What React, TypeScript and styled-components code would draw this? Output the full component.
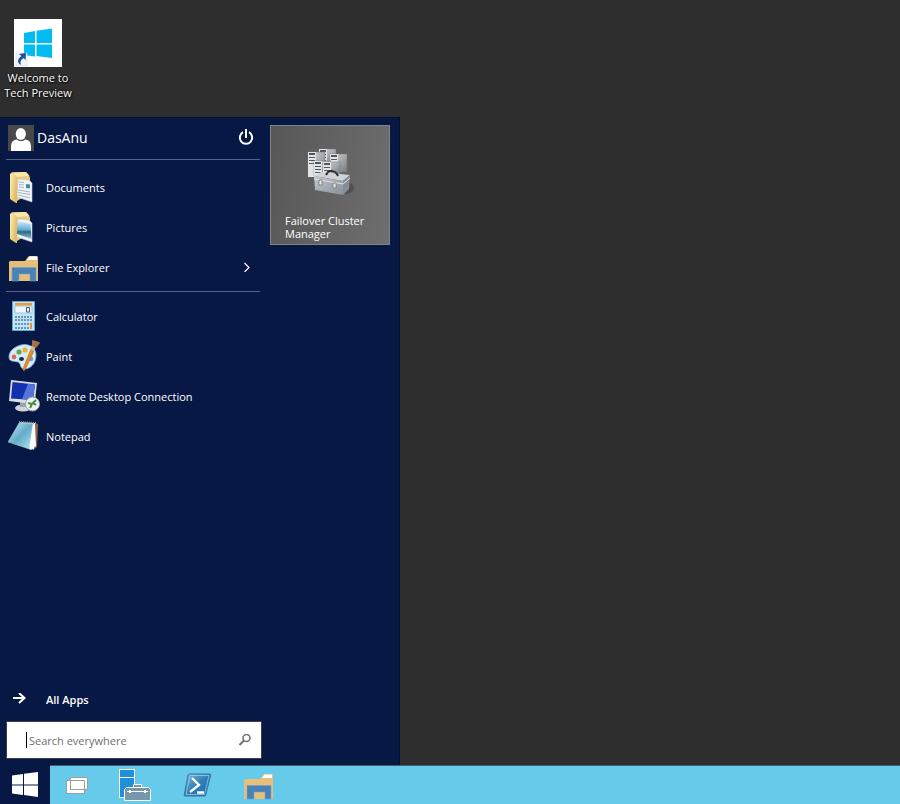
import React from "react";
import styled, { createGlobalStyle } from "styled-components";

const GlobalStyle = createGlobalStyle`
  *, *::before, *::after { box-sizing: border-box; }
  body {
    margin: 0;
    background: #2e2e2e;
    font-family: "Open Sans", "Noto Sans", sans-serif;
    font-size: 11px;
    color: #fff;
  }
  button, input { font: inherit; color: inherit; }
  button { border: 0; padding: 0; background: none; cursor: pointer; }
  svg { display: block; flex: none; }
`;

const Screen = styled.div`
  display: flex;
  flex-direction: column;
  min-height: 100vh;
`;

const Desktop = styled.main`
  padding: 19px 0 17px;
`;

const Shortcut = styled.button`
  display: flex;
  flex-direction: column;
  align-items: center;
  gap: 3px;
  width: 76px;
  line-height: 15px;
  text-shadow: 1px 1px 2px #000, 0 0 2px #000;
`;

const ShortcutLabel = styled.span`
  width: 72px;
`;

const StartMenu = styled.section`
  flex: 1;
  display: flex;
  gap: 8px;
  width: 400px;
  max-width: 100%;
  padding: 7px 9px 6px 6px;
  background: #081844;
  border: solid #050e2c;
  border-width: 1px 1px 0 0;
`;

const MenuColumn = styled.div`
  display: flex;
  flex-direction: column;
  width: 256px;
`;

const Account = styled.header`
  display: flex;
  align-items: center;
  justify-content: space-between;
  margin-right: 2px;
  padding: 0 6px 8px 2px;
  border-bottom: 1px solid #56628a;
`;

const UserButton = styled.button`
  display: flex;
  align-items: center;
  gap: 3px;
  font-size: 14px;
  line-height: 26px;
`;

const List = styled.ul<{ $divided?: boolean }>`
  list-style: none;
  margin: 0 2px 0 0;
  padding: ${(p) => (p.$divided ? "7px 0 4px" : "4px 0")};
  border-bottom: ${(p) => (p.$divided ? "1px solid #56628a" : "0")};
`;

const MenuItem = styled.button`
  display: flex;
  align-items: center;
  gap: 6px;
  width: 100%;
  height: 40px;
  padding: 0 8px 0 2px;
  text-align: left;
`;

const Label = styled.span`
  flex: 1;
`;

const AllApps = styled(MenuItem)`
  gap: 19px;
  margin-top: auto;
  padding-left: 6px;
  font-weight: 600;
`;

const SearchBox = styled.label`
  display: flex;
  align-items: center;
  height: 38px;
  margin-top: 2px;
  padding: 0 10px 0 19px;
  background: #fff;
  border: 1px solid #3c4046;
`;

const Caret = styled.span`
  width: 1px;
  height: 16px;
  margin-right: 2px;
  background: #000;
`;

const SearchInput = styled.input`
  flex: 1;
  min-width: 0;
  padding: 0;
  border: 0;
  outline: 0;
  background: none;
  color: #222;
  &::placeholder { color: #707070; opacity: 1; }
`;

const Tile = styled.button`
  display: flex;
  flex-direction: column;
  justify-content: space-between;
  width: 120px;
  height: 120px;
  padding: 20px 14px 4px;
  border: 1px solid #838383;
  background: linear-gradient(100deg, #575757, #6e6e6e);
  text-align: left;
  line-height: 13px;
  svg { align-self: center; }
`;

const Taskbar = styled.nav`
  display: flex;
  height: 39px;
  background: #66caea;
  border-top: 1px solid #4a5a68;
`;

const StartButton = styled.button`
  display: grid;
  place-items: center;
  width: 50px;
  margin-top: -1px;
  background: #081844;
`;

const TaskButton = styled.button`
  display: grid;
  place-items: center;
  width: 62px;
  &:first-of-type { width: 54px; }
`;

const Apps = styled.div`
  display: flex;
`;

function WindowsShortcutIcon() {
  return (
    <svg width="48" height="48" viewBox="0 0 48 48">
      <path fill="#fff" d="M0 0h48v48H0z" />
      <path fill="#00bcf2" d="M10 14l11-2v12H10zM22.500 11.700L38 9.500V24H22.500zM10 25.500h11v12L10 36zM22.500 25.500H38V39l-15.500-2z" />
      <path fill="#f2f5fa" stroke="#cbd5e4" strokeWidth=".5" d="M2 34h11v13H2z" />
      <path fill="#1d4f9e" d="M5 35l7-1-.5 7-2-2c-3 2-3.500 4-2.500 7-4-2-4-6 .5-9z" />
    </svg>
  );
}

function AvatarIcon() {
  return (
    <svg width="26" height="26" viewBox="0 0 26 26">
      <path fill="#484848" d="M0 0h26v26H0z" />
      <ellipse cx="12.800" cy="9" rx="5.100" ry="6" fill="#fff" />
      <path fill="#fff" d="M3 26v-4c0-5 2-7 6-7.500 2 2 6 2 8 0 4 .5 6 2.500 6 7.500v4z" />
    </svg>
  );
}

function PowerIcon() {
  return (
    <svg width="16" height="18" viewBox="0 0 16 18" fill="none" stroke="#fff" strokeWidth="2">
      <path d="M5 3.200a6.200 6.200 0 1 0 6 0M8 0v9" />
    </svg>
  );
}

function FolderIcon({ picture }: { picture?: boolean }) {
  const id = picture ? "pic" : "doc";
  return (
    <svg width="32" height="32" viewBox="0 0 32 32">
      <defs>
        <linearGradient id={`${id}-flap`} x1="0" x2="1" y2="0.400">
          <stop offset="0" stopColor="#fdf0b8" />
          <stop offset="1" stopColor="#e0bb62" />
        </linearGradient>
        <linearGradient id={`${id}-sky`} x2="0" y2="1">
          <stop offset="0" stopColor="#d4ecf8" />
          <stop offset=".5" stopColor="#5fa8d8" />
          <stop offset=".6" stopColor="#2c6a7c" />
          <stop offset="1" stopColor="#8dc2dc" />
        </linearGradient>
      </defs>
      <path fill="#e9cb7e" d="M3 1.500L18 1l3 3 1 3v15L9 30 3 26z" />
      <path fill="#f8e6aa" d="M4 1.500L18 1l3 4L9 6z" />
      <path fill="#f1f4f7" stroke="#bcc8d2" strokeWidth=".6" d="M10 8l11 1 3 3v19L9 26z" />
      {picture ? (
        <path fill="url(#pic-sky)" d="M9.500 10l13 3 1 15L9 23z" />
      ) : (
        <g>
          <path stroke="#8fa6bb" strokeWidth=".8" fill="none" d="M11 11l5 .5M11 13.500l5 .5M11 16l5 .5M10 19l12 2M10 21.500l12 2M10 24l12 3" />
          <path fill="#3e8cad" d="M18 13l4 .5v4l-4-.5z" />
        </g>
      )}
      <path fill={`url(#${id}-flap)`} d="M2 2.500L7 4l2 3v25H8l-6-4z" />
    </svg>
  );
}

function ExplorerIcon() {
  return (
    <svg width="32" height="32" viewBox="0 0 32 32">
      <path fill="#e8bf78" d="M1 11l1-1h15l3-4 1-1h8l1 1v24H1z" />
      <path fill="#fff" d="M19 9l2.500-3.500H29V9z" />
      <path fill="#4a82b8" stroke="#6aa4d0" strokeWidth=".6" d="M4 16.500h24V30h-6v-7H11v7H4z" />
    </svg>
  );
}

function CalculatorIcon() {
  return (
    <svg width="32" height="32" viewBox="0 0 32 32">
      <path fill="#c8e4f4" stroke="#58a8d4" d="M4.500 1.500h22v29h-22z" />
      <path fill="#f39a2c" d="M7 3h17v2.500H7z" />
      <path fill="#edf5f9" stroke="#8ab8d4" strokeWidth=".7" d="M7 6h17v7H7z" />
      <path fill="none" stroke="#3c5a72" d="M18.500 7.500h3v4.500h-3z" />
      <g stroke="#6098bc" strokeWidth="2" strokeDasharray="2 1">
        <path d="M7 17h17M7 20h17M7 24h14M7 28h14" />
      </g>
      <path fill="#f09430" d="M22 23h2v6h-2z" />
    </svg>
  );
}

function PaintIcon() {
  return (
    <svg width="32" height="32" viewBox="0 0 32 32">
      <path fill="#d8ebf5" stroke="#77b5d8" strokeWidth=".8" d="M13 5c7-2 15 2 15 10 0 8-5 14-12 14-4 0-3-6-6-7-4-1-9 0-9-5C1 11 6 7 13 5z" />
      <ellipse cx="13.500" cy="19" rx="2.500" ry="2" fill="#132a54" />
      <circle cx="6" cy="17" r="2.400" fill="#d96d53" />
      <circle cx="11" cy="12" r="2.600" fill="#61a94b" />
      <circle cx="17" cy="10" r="2.600" fill="#e9b531" />
      <circle cx="23" cy="19" r="2.300" fill="#52a7df" />
      <path fill="#e58b20" stroke="#b9641a" strokeWidth=".5" d="M23 9l3 2-8 17-2 3-1-1 1-4z" />
      <path fill="#c9bcae" d="M23 6l3-2 2 1-2 6-3-1z" />
      <path fill="#a36f49" d="M24 0l4 1 3 1 1 1-4 5-4-2z" />
    </svg>
  );
}

function RemoteIcon() {
  return (
    <svg width="32" height="32" viewBox="0 0 32 32">
      <ellipse cx="15" cy="28" rx="8" ry="3.500" fill="#d0d5da" />
      <path fill="#9ba3ad" d="M12 20h7v7h-7z" />
      <path fill="#d9dee4" d="M3 0l26 3-2 17-3 4L1 21z" />
      <path fill="#1330ae" d="M4.500 2L27 4.500 25 20 3 18.500z" />
      <path fill="#5574d8" d="M20 3.800l7 .7L25 20l-11-.7z" />
      <circle cx="24.500" cy="24" r="7" fill="#eff1f1" stroke="#98a0a5" />
      <path fill="none" stroke="#3f8f42" strokeWidth="2" d="M20 23l4 1-2 4M28 20l-3 3 3 2" />
    </svg>
  );
}

function NotepadIcon() {
  return (
    <svg width="32" height="32" viewBox="0 0 32 32">
      <defs>
        <linearGradient id="pad" x1="0" x2="1" y2="1">
          <stop offset="0" stopColor="#d0ecf4" />
          <stop offset=".5" stopColor="#61adc8" />
          <stop offset="1" stopColor="#bce6f0" />
        </linearGradient>
      </defs>
      <path fill="#8d6648" d="M27 3l3 1-1 23-3 2z" />
      <path fill="#e4edf2" d="M12 2l15 1-1 27-4-2z" />
      <path fill="url(#pad)" stroke="#90c9db" strokeWidth=".5" d="M11 3l14 1-4 25L0 22z" />
      <path fill="#f9fcfc" d="M25 4l2 1 1 21-5 4-2-1z" />
      <path stroke="#949b9e" strokeWidth="2" strokeDasharray="1 1" d="M11 2l17 1" />
    </svg>
  );
}

function ClusterIcon() {
  const racks = [[15, 3, 15], [4, 6, 25], [26, 8, 18], [10, 15, 15], [19, 16, 14]];
  return (
    <svg width="52" height="52" viewBox="0 0 52 52">
      <defs>
        <linearGradient id="rack" x2="1" y2="1">
          <stop offset="0" stopColor="#d9dadb" />
          <stop offset="1" stopColor="#767a7e" />
        </linearGradient>
        <linearGradient id="toolbox" x2="1" y2="1">
          <stop offset="0" stopColor="#c2c8d0" />
          <stop offset="1" stopColor="#868f99" />
        </linearGradient>
      </defs>
      <ellipse cx="42" cy="42" rx="8" ry="6" fill="#505050" />
      {racks.map(([x, y, h]) => (
        <g key={x}>
          <path fill="url(#rack)" stroke="#777" strokeWidth=".5" d={`M${x} ${y}h17v${h}h-17z`} />
          <path fill="#e1e3e6" d={`M${x} ${y}h8v${h}h-8z`} />
          <path fill="#4f575f" d={`M${x + 1} ${y + 1}h6v2h-6zm0 4h6v1h-6zm0 3h6v1h-6zm0 3h6v1h-6z`} />
        </g>
      ))}
      <path fill="#d0d4d9" d="M10 30l7-4 29 3-7 6z" />
      <path fill="url(#toolbox)" d="M10 30l29 5v14l-28-5z" />
      <path fill="#858e98" d="M39 35l7-6-1 14-6 6z" />
      <path fill="none" stroke="#dfe2e6" d="M10 33l29 5 7-6" />
      <path fill="none" stroke="#292b2e" strokeWidth="2" d="M22 29l2-3c3-2 7-1 9 2l1 2" />
      <path fill="#e9e7dc" stroke="#55595d" strokeWidth=".6" d="M15 34h3v5h-3zM29 37h3v5h-3z" />
    </svg>
  );
}

function ArrowIcon() {
  return (
    <svg width="15" height="12" viewBox="0 0 15 12" fill="none" stroke="#fff" strokeWidth="2">
      <path d="M1 5h11M7 0l5.500 5L7 10" />
    </svg>
  );
}

function ChevronIcon() {
  return (
    <svg width="10" height="10" viewBox="0 0 10 10" fill="none" stroke="#fff" strokeWidth="1.200">
      <path d="M2.500 1l4.500 4.500L2.500 10" />
    </svg>
  );
}

function SearchIcon() {
  return (
    <svg width="12" height="12" viewBox="0 0 12 12" fill="none" stroke="#70757c" strokeWidth="1.600">
      <circle cx="7.500" cy="4" r="3.500" />
      <path d="M5 6.500l-4.500 4.500" strokeWidth="2" />
    </svg>
  );
}

function StartIcon() {
  return (
    <svg width="26" height="26" viewBox="0 0 26 26" fill="#fff">
      <path d="M0 3.500L11 2v10.500H0zM12 1.800L26 0v12.500H12zM0 13.500h11V23L0 21.500zM12 13.500h14V25l-14-2z" />
    </svg>
  );
}

function TaskViewIcon() {
  return (
    <svg width="24" height="20" viewBox="0 0 24 20" fill="#fff" stroke="#a09c9a">
      <path d="M5.500 2.500h17v12h-17zM1.500 5.500h18v13h-18z" />
    </svg>
  );
}

function ServerManagerIcon() {
  return (
    <svg width="34" height="34" viewBox="0 0 34 34">
      <path fill="#1e90dc" stroke="#fff" d="M1.500 1.500h15v28h-15zM1.500 9.500h15" />
      <path fill="#7896aa" stroke="#fff" d="M15.500 19.500v-3h8v3zM6.500 21.500l2-2h22l2 2v11h-26z" />
      <path fill="none" stroke="#fff" d="M9 23.500h21" />
      <path fill="#fff" d="M11 22h2v3h-2zM26 22h2v3h-2z" />
    </svg>
  );
}

function PowerShellIcon() {
  return (
    <svg width="30" height="26" viewBox="0 0 30 26">
      <defs>
        <linearGradient id="shell" x2="1" y2="1">
          <stop offset="0" stopColor="#82bde2" />
          <stop offset=".5" stopColor="#2d7fb9" />
          <stop offset="1" stopColor="#1e67a7" />
        </linearGradient>
      </defs>
      <path fill="url(#shell)" stroke="#37779f" d="M8 2h20q1 0 .7 1l-5 20q-.3 1-1.300 1H3q-1 0-.8-1L6 3q.5-1 2-1z" />
      <path fill="none" stroke="#a9d5ed" strokeWidth=".7" d="M8 3.500h19l-4.500 19H4z" />
      <path fill="none" stroke="#fff" strokeWidth="2.400" d="M10 6l7 7-9 7M15 20.500h7" />
    </svg>
  );
}

const places = [
  { name: "Documents", icon: <FolderIcon /> },
  { name: "Pictures", icon: <FolderIcon picture /> },
  { name: "File Explorer", icon: <ExplorerIcon />, expandable: true },
];

const programs = [
  { name: "Calculator", icon: <CalculatorIcon /> },
  { name: "Paint", icon: <PaintIcon /> },
  { name: "Remote Desktop Connection", icon: <RemoteIcon /> },
  { name: "Notepad", icon: <NotepadIcon /> },
];

const taskbarApps = [
  { name: "Task View", icon: <TaskViewIcon /> },
  { name: "Server Manager", icon: <ServerManagerIcon /> },
  { name: "Windows PowerShell", icon: <PowerShellIcon /> },
  { name: "File Explorer", icon: <ExplorerIcon /> },
];

export default function App() {
  return (
    <Screen>
      <GlobalStyle />
      <Desktop>
        <Shortcut>
          <WindowsShortcutIcon />
          <ShortcutLabel>Welcome to Tech Preview</ShortcutLabel>
        </Shortcut>
      </Desktop>
      <StartMenu aria-label="Start menu">
        <MenuColumn>
          <Account>
            <UserButton><AvatarIcon />DasAnu</UserButton>
            <button aria-label="Power"><PowerIcon /></button>
          </Account>
          <List $divided>
            {places.map((p) => (
              <li key={p.name}>
                <MenuItem>{p.icon}<Label>{p.name}</Label>{p.expandable && <ChevronIcon />}</MenuItem>
              </li>
            ))}
          </List>
          <List>
            {programs.map((p) => (
              <li key={p.name}><MenuItem>{p.icon}<Label>{p.name}</Label></MenuItem></li>
            ))}
          </List>
          <AllApps><ArrowIcon /><Label>All Apps</Label></AllApps>
          <SearchBox>
            <Caret />
            <SearchInput type="text" aria-label="Search everywhere" placeholder="Search everywhere" />
            <SearchIcon />
          </SearchBox>
        </MenuColumn>
        <Tile><ClusterIcon /><span>Failover Cluster Manager</span></Tile>
      </StartMenu>
      <Taskbar aria-label="Taskbar">
        <StartButton aria-label="Start"><StartIcon /></StartButton>
        <Apps>
          {taskbarApps.map((a) => (
            <TaskButton key={a.name} aria-label={a.name}>{a.icon}</TaskButton>
          ))}
        </Apps>
      </Taskbar>
    </Screen>
  );
}
